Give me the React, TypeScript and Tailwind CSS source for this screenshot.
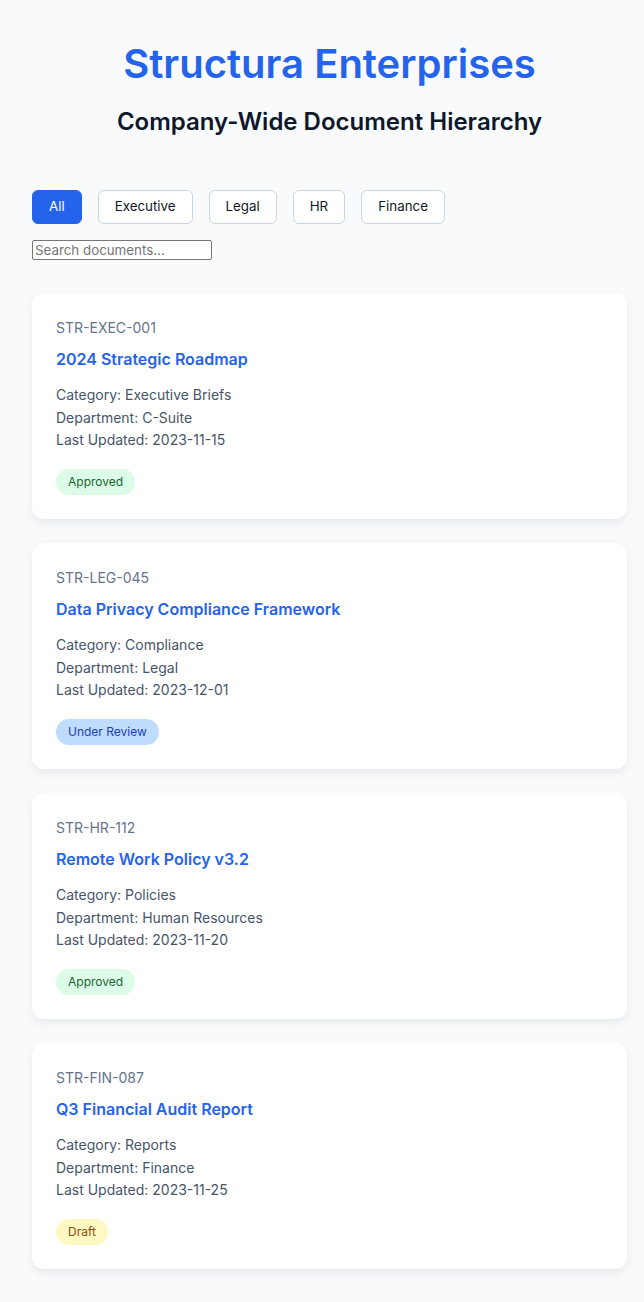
import React from "react";

type Doc = {
  id: string;
  title: string;
  category: string;
  department: string;
  updated: string;
  status: "Approved" | "Under Review" | "Draft";
};

const docs: Doc[] = [
  { id: "STR-EXEC-001", title: "2024 Strategic Roadmap", category: "Executive Briefs", department: "C-Suite", updated: "2023-11-15", status: "Approved" },
  { id: "STR-LEG-045", title: "Data Privacy Compliance Framework", category: "Compliance", department: "Legal", updated: "2023-12-01", status: "Under Review" },
  { id: "STR-HR-112", title: "Remote Work Policy v3.2", category: "Policies", department: "Human Resources", updated: "2023-11-20", status: "Approved" },
  { id: "STR-FIN-087", title: "Q3 Financial Audit Report", category: "Reports", department: "Finance", updated: "2023-11-25", status: "Draft" },
];

const badgeClass: Record<Doc["status"], string> = {
  Approved: "bg-[#dcfce7] text-[#166534]",
  "Under Review": "bg-[#bfdbfe] text-[#1e40af]",
  Draft: "bg-[#fef9c3] text-[#854d0e]",
};

const filters = ["All", "Executive", "Legal", "HR", "Finance"];

export default function App() {
  return (
    <div className="min-h-[1302px] bg-[#f8fafc] font-['Inter',sans-serif]">
      <div className="pl-8 pr-[17px] pt-[40px] pb-8">
        <header className="text-center">
          <h1 className="text-[40px] leading-[48px] font-semibold text-[#2563eb]">Structura Enterprises</h1>
          <h2 className="mt-[20px] text-[24px] leading-[28px] font-semibold text-[#0f172a]">Company-Wide Document Hierarchy</h2>
        </header>

        <div className="mt-[54px] flex gap-4">
          {filters.map((f, i) => (
            <button
              key={f}
              className={
                i === 0
                  ? "h-[34px] px-4 rounded-md border border-[#2563eb] bg-[#2563eb] text-white text-[13.33px]"
                  : "h-[34px] px-4 rounded-md border border-[#cbd5e1] bg-white text-[#111827] text-[13.33px]"
              }
            >
              {f}
            </button>
          ))}
        </div>

        <div className="mt-4">
          <input
            type="text"
            placeholder="Search documents..."
            className="block w-[180px] h-[20px] border border-[#767676] rounded-[2px] bg-white px-[2px] text-[13.33px] placeholder:text-[#757575] outline-none"
          />
        </div>

        <div className="mt-[33px] flex flex-col gap-6">
          {docs.map((d) => (
            <div
              key={d.id}
              className="h-[226px] bg-white rounded-xl shadow-[0_4px_8px_rgba(15,23,42,0.07)] px-6 pt-6"
            >
              <div className="text-[14px] leading-[21px] text-[#64748b]">{d.id}</div>
              <div className="mt-2 text-[16px] leading-[26px] font-semibold text-[#2563eb]">{d.title}</div>
              <div className="mt-3 text-[14px] leading-[22.5px] text-[#475569]">
                <div>Category: {d.category}</div>
                <div>Department: {d.department}</div>
                <div>Last Updated: {d.updated}</div>
              </div>
              <div className="mt-[16.5px]">
                <span className={"inline-block rounded-full px-3 py-1 text-[12px] leading-[18px] " + badgeClass[d.status]}>
                  {d.status}
                </span>
              </div>
            </div>
          ))}
        </div>
      </div>
    </div>
  );
}
